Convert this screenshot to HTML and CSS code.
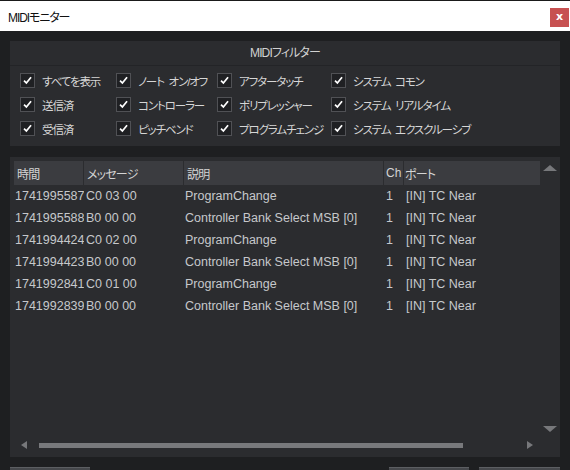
FILE: index.html
```html
<!DOCTYPE html>
<html lang="ja">
<head>
<meta charset="utf-8">
<title>MIDIモニター</title>
<link rel="stylesheet" href="styles.css">
</head>
<body>
<div class="window">
  <div class="titlebar">
    <span class="title">MIDIモニター</span>
    <span class="close">x</span>
  </div>
  <div class="content">
    <section class="filter">
      <div class="filter-head">MIDIフィルター</div>
      <div class="filter-grid">
        <label class="cb"><span class="box"><svg viewBox="0 0 15 15"><path d="M3.5 7.6 L6.2 10.4 L11.6 3.8"/></svg></span>すべてを表示</label>
        <label class="cb"><span class="box"><svg viewBox="0 0 15 15"><path d="M3.5 7.6 L6.2 10.4 L11.6 3.8"/></svg></span>ノート オン/オフ</label>
        <label class="cb"><span class="box"><svg viewBox="0 0 15 15"><path d="M3.5 7.6 L6.2 10.4 L11.6 3.8"/></svg></span>アフタータッチ</label>
        <label class="cb"><span class="box"><svg viewBox="0 0 15 15"><path d="M3.5 7.6 L6.2 10.4 L11.6 3.8"/></svg></span>システム コモン</label>
        <label class="cb"><span class="box"><svg viewBox="0 0 15 15"><path d="M3.5 7.6 L6.2 10.4 L11.6 3.8"/></svg></span>送信済</label>
        <label class="cb"><span class="box"><svg viewBox="0 0 15 15"><path d="M3.5 7.6 L6.2 10.4 L11.6 3.8"/></svg></span>コントローラー</label>
        <label class="cb"><span class="box"><svg viewBox="0 0 15 15"><path d="M3.5 7.6 L6.2 10.4 L11.6 3.8"/></svg></span>ポリプレッシャー</label>
        <label class="cb"><span class="box"><svg viewBox="0 0 15 15"><path d="M3.5 7.6 L6.2 10.4 L11.6 3.8"/></svg></span>システム リアルタイム</label>
        <label class="cb"><span class="box"><svg viewBox="0 0 15 15"><path d="M3.5 7.6 L6.2 10.4 L11.6 3.8"/></svg></span>受信済</label>
        <label class="cb"><span class="box"><svg viewBox="0 0 15 15"><path d="M3.5 7.6 L6.2 10.4 L11.6 3.8"/></svg></span>ピッチベンド</label>
        <label class="cb"><span class="box"><svg viewBox="0 0 15 15"><path d="M3.5 7.6 L6.2 10.4 L11.6 3.8"/></svg></span>プログラムチェンジ</label>
        <label class="cb"><span class="box"><svg viewBox="0 0 15 15"><path d="M3.5 7.6 L6.2 10.4 L11.6 3.8"/></svg></span>システム エクスクルーシブ</label>
      </div>
    </section>

    <section class="log">
      <div class="table">
        <div class="row head">
          <div class="c c-time">時間</div>
          <div class="c c-msg">メッセージ</div>
          <div class="c c-desc">説明</div>
          <div class="c c-ch">Ch</div>
          <div class="c c-port">ポート</div>
        </div>
        <div class="row">
          <div class="c c-time">1741995587</div><div class="c c-msg">C0 03 00</div><div class="c c-desc">ProgramChange</div><div class="c c-ch">1</div><div class="c c-port">[IN] TC Near</div>
        </div>
        <div class="row">
          <div class="c c-time">1741995588</div><div class="c c-msg">B0 00 00</div><div class="c c-desc">Controller Bank Select MSB [0]</div><div class="c c-ch">1</div><div class="c c-port">[IN] TC Near</div>
        </div>
        <div class="row">
          <div class="c c-time">1741994424</div><div class="c c-msg">C0 02 00</div><div class="c c-desc">ProgramChange</div><div class="c c-ch">1</div><div class="c c-port">[IN] TC Near</div>
        </div>
        <div class="row">
          <div class="c c-time">1741994423</div><div class="c c-msg">B0 00 00</div><div class="c c-desc">Controller Bank Select MSB [0]</div><div class="c c-ch">1</div><div class="c c-port">[IN] TC Near</div>
        </div>
        <div class="row">
          <div class="c c-time">1741992841</div><div class="c c-msg">C0 01 00</div><div class="c c-desc">ProgramChange</div><div class="c c-ch">1</div><div class="c c-port">[IN] TC Near</div>
        </div>
        <div class="row">
          <div class="c c-time">1741992839</div><div class="c c-msg">B0 00 00</div><div class="c c-desc">Controller Bank Select MSB [0]</div><div class="c c-ch">1</div><div class="c c-port">[IN] TC Near</div>
        </div>
      </div>
      <div class="vscroll">
        <span class="arrow up"></span>
        <span class="arrow down"></span>
      </div>
      <div class="hscroll">
        <span class="arrow left"></span>
        <span class="thumb"></span>
        <span class="arrow right"></span>
      </div>
      <div class="corner"></div>
    </section>

    <div class="buttons">
      <span class="btn"></span>
      <span class="spacer"></span>
      <span class="btn"></span>
      <span class="btn wide"></span>
    </div>
  </div>
</div>
</body>
</html>
```

FILE: styles.css
```css
html, body {
  margin: 0;
  padding: 0;
  background: #1e1f21;
  overflow: hidden;
}
body {
  width: 570px;
  height: 470px;
  font-family: "Liberation Sans", "Noto Sans CJK JP", sans-serif;
}
.window {
  width: 570px;
  height: 470px;
  overflow: hidden;
}
.titlebar {
  height: 30px;
  border-top: 1px solid #1a1a1a;
  background: #ffffff;
  display: flex;
  align-items: center;
  justify-content: space-between;
  padding-left: 8px;
  padding-right: 1px;
}
.title {
  font-size: 12px;
  color: #111;
  font-feature-settings: "palt";
  letter-spacing: -1.1px;
}
.close {
  width: 19px;
  height: 19px;
  margin-top: 3px;
  background: #c75151;
  color: #fff;
  font-weight: bold;
  font-size: 11px;
  line-height: 17px;
  text-align: center;
  font-family: "DejaVu Sans", sans-serif;
}
.content {
  padding: 10px 10px 0 10px;
}
.filter {
  background: #2b2c2f;
  height: 105px;
  box-sizing: border-box;
}
.filter-head {
  height: 24px;
  border-bottom: 1px solid #232427;
  color: #d2d2d2;
  font-size: 12px;
  text-align: center;
  line-height: 24px;
  font-feature-settings: "palt";
  letter-spacing: -0.9px;
}
.filter-grid {
  display: grid;
  grid-template-columns: 96px 101px 114px auto;
  row-gap: 9px;
  padding: 7px 0 0 10px;
}
.cb {
  display: flex;
  align-items: center;
  gap: 7px;
  height: 15px;
  color: #d6d6d6;
  font-size: 11.5px;
  letter-spacing: -1.1px;
  word-spacing: 2.5px;
  font-feature-settings: "palt";
  white-space: nowrap;
}
.box {
  width: 15px;
  height: 15px;
  box-sizing: border-box;
  border: 1px solid #505155;
  background: #1f2023;
  display: flex;
  align-items: center;
  justify-content: center;
  flex: none;
}
.box svg {
  width: 13px;
  height: 13px;
}
.box path {
  fill: none;
  stroke: #ffffff;
  stroke-width: 2;
}
.log {
  margin-top: 11px;
  height: 300px;
  box-sizing: border-box;
  background: #2b2c2f;
  padding: 4px 0 4px 4px;
  display: grid;
  grid-template-columns: 1fr 20px;
  grid-template-rows: 1fr 16px;
}
.table {
  font-size: 12.5px;
  color: #c6c8cb;
  overflow: hidden;
}
.row {
  display: flex;
  height: 22px;
  align-items: center;
  white-space: nowrap;
}
.row.head {
  height: 24px;
  gap: 1px;
  align-items: stretch;
  color: #d4d4d4;
  font-size: 12px;
  font-feature-settings: "palt";
  letter-spacing: -0.8px;
}
.row.head .c {
  background: #3b3c40;
  display: flex;
  align-items: center;
  padding-left: 3px;
  box-sizing: border-box;
}
.c {
  flex: none;
  overflow: hidden;
}
.row.head .c-time { width: 69px; }
.row.head .c-msg { width: 99px; }
.row.head .c-desc { width: 199px; }
.row.head .c-ch { width: 19px; padding-left: 2px; letter-spacing: 0; }
.row.head .c-port { width: 136px; padding-left: 1px; }
.row:not(.head) .c { box-sizing: border-box; }
.row:not(.head) .c-time { width: 70px; padding-left: 1px; }
.row:not(.head) .c-msg { width: 100px; padding-left: 2px; }
.row:not(.head) .c-desc { width: 202px; padding-left: 1px; }
.row:not(.head) .c-ch { width: 18px; padding-left: 0; }
.row:not(.head) .c-port { width: 136px; padding-left: 2px; }

.vscroll {
  display: flex;
  flex-direction: column;
  justify-content: space-between;
  align-items: center;
  padding: 4px 0 5px 0;
}
.arrow {
  width: 0;
  height: 0;
  display: block;
}
.arrow.up {
  border-left: 7px solid transparent;
  border-right: 7px solid transparent;
  border-bottom: 6px solid #77787b;
}
.arrow.down {
  border-left: 7px solid transparent;
  border-right: 7px solid transparent;
  border-top: 6px solid #77787b;
}
.hscroll {
  display: flex;
  align-items: center;
  padding: 0 7px;
}
.arrow.left {
  border-top: 4px solid transparent;
  border-bottom: 4px solid transparent;
  border-right: 6px solid #77787b;
}
.arrow.right {
  border-top: 4px solid transparent;
  border-bottom: 4px solid transparent;
  border-left: 6px solid #77787b;
  margin-left: auto;
}
.thumb {
  width: 424px;
  height: 5px;
  background: #78797c;
  margin-left: 12px;
}
.buttons {
  display: flex;
  gap: 10px;
  margin-top: 10px;
}
.btn {
  width: 80px;
  height: 24px;
  box-sizing: border-box;
  background: #45474b;
  border-top: 1px solid #5c5e62;
}
.btn.wide { width: 81px; }
.spacer { flex: 1; }
```
